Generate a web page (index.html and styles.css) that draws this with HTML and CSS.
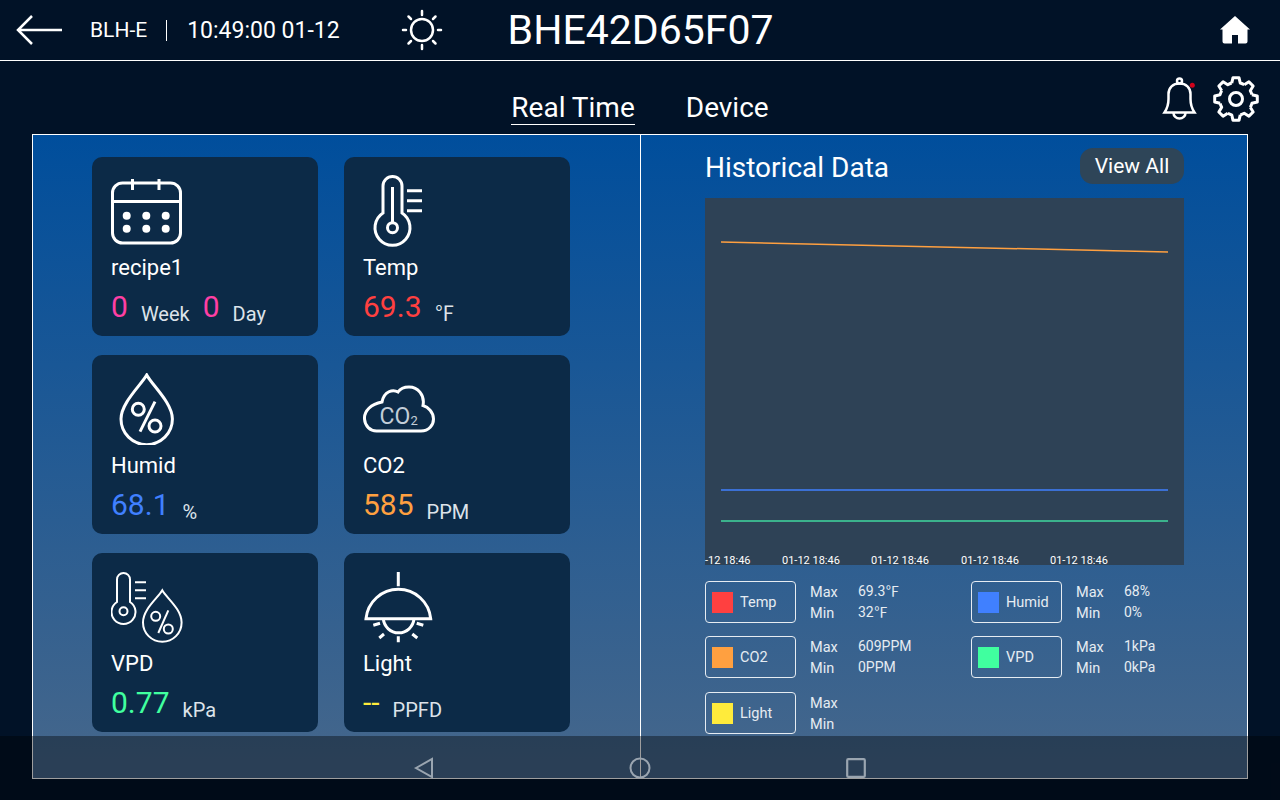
FILE: index.html
```html
<!DOCTYPE html>
<html lang="en">
<head>
  <meta charset="UTF-8" />
  <meta name="viewport" content="width=device-width, initial-scale=1.0" />
  <title>BHE42D65F07</title>
  <link rel="stylesheet" href="styles.css">
</head>
<body>
  <header class="topbar">
    <svg class="back-icon" viewBox="0 0 48 32"><path d="M47 16H3M17 2 3 16l14 14"/></svg>
    <span class="model">BLH-E</span>
    <span class="clock">10:49:00 01-12</span>
    <svg class="sun-icon" viewBox="0 0 42 42">
      <circle cx="21" cy="21" r="11"/>
      <path d="M21 2v4M21 36v4M2 21h3M37 21h3M7.500 7.500l2.500 2.500M34.500 7.500l-2.500 2.500M7.500 34.500l2.500-2.500M34.500 34.500l-2.500-2.500"/>
    </svg>
    <span class="device-id">BHE42D65F07</span>
    <svg class="home-icon" viewBox="0 0 30 28"><path d="M15 0 30 13.500h-2.500V25.500a2 2 0 0 1-2 2H18V19h-6v8.500H4.500a2 2 0 0 1-2-2V13.500H0Z"/></svg>
  </header>

  <div class="subbar">
    <div></div>
    <nav class="tabs">
      <a class="tab active">Real Time</a>
      <a class="tab">Device</a>
    </nav>
    <div class="tools">
      <svg class="bell-icon" viewBox="0 0 40 46">
        <circle cx="19.500" cy="5" r="2.500"/>
        <path d="M4.500 36.500C7.500 32 8.500 28 8.500 23V18C8.500 11.500 13 7.500 19.500 7.500S30.500 11.500 30.500 18V23C30.500 28 31.500 32 34.500 36.500Z"/>
        <path d="M13.500 37a6 5.500 0 0 0 12 0"/>
        <circle class="bell-dot" cx="32.300" cy="9.300" r="2.500"/>
      </svg>
      <svg class="gear-icon" viewBox="-24 -24 48 48">
        <defs><path id="tooth" d="M-4.270-15.940-2.990-21.290H2.990L4.270-15.940A16.500 16.500 0 0 1 8.250-14.290"/></defs>
        <use href="#tooth"/>
        <use href="#tooth" transform="rotate(45)"/>
        <use href="#tooth" transform="rotate(90)"/>
        <use href="#tooth" transform="rotate(135)"/>
        <use href="#tooth" transform="rotate(180)"/>
        <use href="#tooth" transform="rotate(225)"/>
        <use href="#tooth" transform="rotate(270)"/>
        <use href="#tooth" transform="rotate(315)"/>
        <circle r="6.500"/>
      </svg>
    </div>
  </div>

  <main class="panel">
    <section class="cards">
      <div class="card">
        <svg class="card-icon" viewBox="0 0 72 72">
          <rect x="1.500" y="8" width="68" height="60" rx="10"/>
          <path d="M1.500 26.500h68M21.500 4v11M48 4v11"/>
          <g class="fill">
            <circle cx="15.700" cy="40.700" r="4"/><circle cx="35.300" cy="40.700" r="4"/><circle cx="54.700" cy="40.700" r="4"/>
            <circle cx="15.700" cy="53.700" r="4"/><circle cx="35.300" cy="53.700" r="4"/><circle cx="54.700" cy="53.700" r="4"/>
          </g>
        </svg>
        <div class="card-label">recipe1</div>
        <div class="card-value">
          <span class="num pink">0</span><span class="unit">Week</span>
          <span class="num pink second">0</span><span class="unit">Day</span>
        </div>
      </div>

      <div class="card">
        <svg class="card-icon" viewBox="0 0 72 72">
          <path d="M20 38V11a9.500 9.500 0 0 1 19 0V38A17.500 17.500 0 1 1 20 38Z"/>
          <circle cx="29.500" cy="52.700" r="5"/>
          <path d="M29.500 12V47M44 15.700h15M44 25.700h15M44 35.700h15"/>
        </svg>
        <div class="card-label">Temp</div>
        <div class="card-value"><span class="num red">69.3</span><span class="unit">℉</span></div>
      </div>

      <div class="card">
        <svg class="card-icon" viewBox="0 0 72 72">
          <path d="M35.700 2C30 12 10 30 10 46A25.700 25.700 0 0 0 61.400 46C61.400 30 41 12 35.700 2Z"/>
          <circle cx="27.300" cy="36.300" r="6"/>
          <circle cx="44" cy="53" r="6"/>
          <path d="M44 28.700 29 58.700"/>
        </svg>
        <div class="card-label">Humid</div>
        <div class="card-value"><span class="num blue">68.1</span><span class="unit">%</span></div>
      </div>

      <div class="card">
        <svg class="card-icon" viewBox="0 0 72 72">
          <path d="M13.500 58H58C66 58 70.500 52 70.500 46C70.500 39 65 34 60 32.500C62 22 55 14 46 14C41 14 37 16 35 19C30 16 21 18 19 29C8 31 1 38 1.500 46C2 53 7 58 13.500 58Z"/>
          <text class="co2-text" x="16.500" y="51">CO</text>
          <text class="co2-sub" x="47.500" y="51.500">2</text>
        </svg>
        <div class="card-label">CO2</div>
        <div class="card-value"><span class="num orange">585</span><span class="unit">PPM</span></div>
      </div>

      <div class="card">
        <svg class="card-icon thin" viewBox="0 0 72 72">
          <path d="M6 31V8.500a6.500 6.500 0 0 1 13 0V31A12 12 0 1 1 6 31Z"/>
          <circle cx="12.500" cy="40.300" r="4"/>
          <path d="M24 11.300h11M24 19.300h11M24 27.300h11"/>
          <path d="M51.300 19.300C47 27 32 38 32 51.500A19.300 19.300 0 0 0 70.600 51.500C70.600 38 55.500 27 51.300 19.300Z"/>
          <circle cx="44.700" cy="45.300" r="4.500"/>
          <circle cx="57.300" cy="58" r="4.500"/>
          <path d="M57.300 39.300 47.300 62"/>
        </svg>
        <div class="card-label">VPD</div>
        <div class="card-value"><span class="num green">0.77</span><span class="unit">kPa</span></div>
      </div>

      <div class="card">
        <svg class="card-icon" viewBox="0 0 72 72">
          <path d="M35.300 1V15.300M3 47.700A32.500 32.500 0 0 1 67.700 47.700Z"/>
          <path d="M20.300 47.700A15.400 15.400 0 0 0 51 47.700"/>
          <path d="M10.300 54.300 17 52.300M16.300 67 21 63M35.300 65.300V71.300M49.300 63 54.300 67M53.700 52.300 60.300 54.300"/>
        </svg>
        <div class="card-label">Light</div>
        <div class="card-value"><span class="num yellow">--</span><span class="unit">PPFD</span></div>
      </div>
    </section>

    <section class="history">
      <div class="history-head">
        <h2>Historical Data</h2>
        <button class="view-all">View All</button>
      </div>
      <svg class="chart" viewBox="0 0 479 367">
        <line class="line-orange" x1="16" y1="44" x2="463" y2="54"/>
        <line class="line-blue" x1="16" y1="292" x2="463" y2="292"/>
        <line class="line-green" x1="16" y1="323" x2="463" y2="323"/>
        <text x="0" y="366">-12 18:46</text>
        <text x="77" y="366">01-12 18:46</text>
        <text x="166" y="366">01-12 18:46</text>
        <text x="256" y="366">01-12 18:46</text>
        <text x="345" y="366">01-12 18:46</text>
      </svg>
      <div class="legend">
        <div class="legend-item">
          <div class="legend-key"><i class="swatch bg-red"></i>Temp</div>
          <div class="stats"><span>Max</span><span class="val">69.3℉</span><span>Min</span><span class="val">32℉</span></div>
        </div>
        <div class="legend-item">
          <div class="legend-key"><i class="swatch bg-blue"></i>Humid</div>
          <div class="stats"><span>Max</span><span class="val">68%</span><span>Min</span><span class="val">0%</span></div>
        </div>
        <div class="legend-item">
          <div class="legend-key"><i class="swatch bg-orange"></i>CO2</div>
          <div class="stats"><span>Max</span><span class="val">609PPM</span><span>Min</span><span class="val">0PPM</span></div>
        </div>
        <div class="legend-item">
          <div class="legend-key"><i class="swatch bg-green"></i>VPD</div>
          <div class="stats"><span>Max</span><span class="val">1kPa</span><span>Min</span><span class="val">0kPa</span></div>
        </div>
        <div class="legend-item last-row">
          <div class="legend-key"><i class="swatch bg-yellow"></i>Light</div>
          <div class="stats"><span>Max</span><span class="val"></span><span>Min</span><span class="val"></span></div>
        </div>
      </div>
    </section>
  </main>

  <div class="navbar">
    <div class="nav-slot"><svg viewBox="0 0 20 22"><path d="M2 11 18 2V20Z"/></svg></div>
    <div class="nav-slot"><svg viewBox="0 0 22 22"><circle cx="11" cy="11" r="9.500"/></svg></div>
    <div class="nav-slot"><svg viewBox="0 0 20 20"><rect x="2" y="2" width="16" height="16" rx="1"/></svg></div>
  </div>
</body>
</html>
```

FILE: styles.css
```css
* {
  box-sizing: border-box;
}

body {
  margin: 0;
  width: 1280px;
  height: 800px;
  overflow: hidden;
  position: relative;
  background-color: #011227;
  color: #fff;
  font-family: Roboto, "Noto Sans CJK SC", sans-serif;
}

svg {
  display: block;
  fill: none;
  stroke: #fff;
}

.topbar {
  height: 61px;
  border-bottom: 1px solid #fff;
  display: flex;
  align-items: center;
  padding-left: 15px;
}

.back-icon {
  width: 48px;
  height: 32px;
  stroke-width: 2.5;
}

.model {
  margin-left: 27px;
  padding-right: 19px;
  border-right: 1px solid #fff;
  font-size: 21px;
  line-height: 21px;
}

.clock {
  margin-left: 20px;
  font-size: 23px;
}

.sun-icon {
  width: 42px;
  height: 42px;
  margin-left: 61px;
  stroke-width: 2.500;
  stroke-linecap: round;
}

.device-id {
  margin-left: 65px;
  font-size: 41px;
}

.home-icon {
  width: 30px;
  height: 28px;
  margin-left: auto;
  margin-right: 30px;
  fill: #fff;
  stroke: none;
}

.subbar {
  height: 73px;
  display: grid;
  grid-template-columns: 1fr auto 1fr;
}

.tabs {
  display: flex;
  gap: 51px;
  padding-top: 29px;
}

.tab {
  height: 35px;
  font-size: 28px;
  line-height: 36px;
}

.tab.active {
  border-bottom: 1px solid #fff;
}

.tools {
  display: flex;
  justify-content: flex-end;
  align-items: flex-start;
  gap: 12px;
  padding: 14px 20px 0 0;
}

.bell-icon {
  width: 40px;
  height: 46px;
  stroke-width: 2.500;
  margin-top: 1px;
}

.bell-dot {
  fill: #d0021b;
  stroke: none;
}

.gear-icon {
  width: 48px;
  height: 48px;
  stroke-width: 3;
  stroke-linejoin: round;
}

.panel {
  margin: 0 32px;
  height: 645px;
  border: 1px solid #fff;
  background: linear-gradient(180deg, #004e9c 0%, #46678b 100%);
  display: grid;
  grid-template-columns: 607px 1fr;
}

.cards {
  display: grid;
  grid-template-columns: 226px 226px;
  grid-auto-rows: 179px;
  gap: 19px 26px;
  padding: 22px 0 0 59px;
}

.card {
  background-color: #0c2a47;
  border-radius: 10px;
  padding: 18px 0 0 19px;
}

.card-icon {
  width: 72px;
  height: 72px;
  stroke-width: 3;
}

.card-icon.thin {
  stroke-width: 2;
}

.card-icon .fill {
  fill: #fff;
  stroke: none;
}

.co2-text,
.co2-sub {
  fill: #c3ced8;
  stroke: none;
}

.co2-text {
  font-size: 23px;
}

.co2-sub {
  font-size: 13px;
}

.card-label {
  margin-top: 7px;
  font-size: 22px;
  line-height: 28px;
}

.card-value {
  margin-top: 5px;
  display: flex;
  align-items: flex-start;
  height: 40px;
}

.num {
  font-size: 30px;
  line-height: 40px;
}

.num.second {
  margin-left: 13px;
}

.unit {
  margin: 14px 0 0 13px;
  font-size: 20px;
  line-height: 26px;
  color: #dde3ea;
}

.pink { color: #ff3fa4; }
.red { color: #ff4040; }
.blue { color: #4080ff; }
.orange { color: #ffa040; }
.green { color: #40ff9f; }
.yellow { color: #ffeb3b; }

.history {
  border-left: 1px solid #fff;
  padding: 13px 0 0 64px;
}

.history-head {
  width: 479px;
  height: 36px;
  display: flex;
  justify-content: space-between;
  align-items: center;
}

.history-head h2 {
  margin: 0;
  font-size: 28px;
  font-weight: 400;
  padding-top: 2px;
}

.view-all {
  width: 104px;
  height: 36px;
  border: none;
  border-radius: 13px;
  background-color: #2e4558;
  color: #fff;
  font-family: inherit;
  font-size: 21px;
  padding: 0;
}

.chart {
  margin-top: 14px;
  width: 479px;
  height: 367px;
  overflow: visible;
  background-color: #2e4256;
  stroke: none;
}

.chart line {
  stroke-width: 1.500;
}

.chart text {
  fill: #fff;
  font-size: 11px;
}

.line-orange { stroke: #ffa040; }
.line-blue { stroke: #4080ff; }
.line-green { stroke: #40d89f; }

.legend {
  margin-top: 16px;
  display: grid;
  grid-template-columns: 266px 1fr;
  grid-auto-rows: 42px;
  row-gap: 13px;
}

.legend-item {
  display: flex;
}

.legend-item.last-row {
  margin-top: 1px;
}

.legend-key {
  width: 91px;
  height: 42px;
  border: 1px solid #e6ecf2;
  border-radius: 4px;
  display: flex;
  align-items: center;
  gap: 7px;
  padding-left: 6px;
  font-size: 14.500px;
  color: #e6ecf2;
}

.swatch {
  width: 21px;
  height: 21px;
}

.bg-red { background-color: #ff4040; }
.bg-blue { background-color: #4080ff; }
.bg-orange { background-color: #ffa040; }
.bg-green { background-color: #40ff9f; }
.bg-yellow { background-color: #ffeb3b; }

.stats {
  margin-left: 14px;
  padding-top: 1px;
  display: grid;
  grid-template-columns: 48px auto;
  grid-auto-rows: 21px;
  align-content: center;
  font-size: 14.500px;
  line-height: 21px;
  color: #e6ecf2;
}

.last-row .stats {
  padding-top: 3px;
}

.stats .val {
  font-size: 14px;
  line-height: 19px;
}

.navbar {
  position: absolute;
  left: 0;
  bottom: 0;
  width: 100%;
  height: 64px;
  background-color: rgba(0, 0, 0, 0.38);
  display: flex;
  justify-content: center;
  align-items: center;
}

.nav-slot {
  width: 216px;
  display: flex;
  justify-content: center;
}

.nav-slot svg {
  width: 22px;
  height: 22px;
  stroke: #9aa5b0;
  stroke-width: 2;
}
```
